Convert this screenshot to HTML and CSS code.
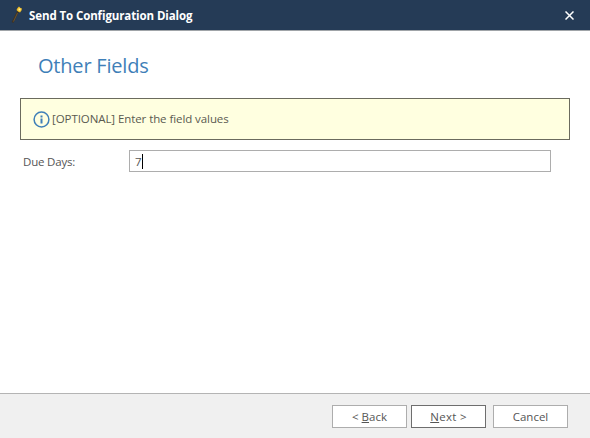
FILE: index.html
```html
<!DOCTYPE html>
<html lang="en">
<head>
    <meta charset="UTF-8">
    <title>Send To Configuration Dialog</title>
    <link rel="stylesheet" href="styles.css">
</head>
<body>
    <div class="dialog">
        <div class="title-bar">
            <svg class="wand-icon" width="18" height="20" viewBox="0 0 18 20">
                <path d="M1.5 17.5 L7 6.5" stroke="#3f3220" stroke-width="1.8"/>
                <path d="M2.5 16.5 L6.5 8" stroke="#85693a" stroke-width="0.6"/>
                <path d="M8 1.5 L9.5 3 L11 3.5 L10.5 5.5 L9 7.5 L7 6.5 L5.5 5 L6.5 3 Z" fill="#eebb22"/>
                <rect x="7.5" y="3.5" width="2" height="2" fill="#fff0a0"/>
            </svg>
            <span class="title-text">Send To Configuration Dialog</span>
            <svg class="close-icon" width="9" height="9" viewBox="0 0 9 9">
                <path d="M0.5 0.5 L8.5 8.5 M8.5 0.5 L0.5 8.5" stroke="#fff" stroke-width="1.5"/>
            </svg>
        </div>

        <div class="content">
            <h1>Other Fields</h1>
            <div class="notice">
                <svg class="info-icon" width="17" height="17" viewBox="0 0 17 17">
                    <circle cx="8.5" cy="8.5" r="7.4" fill="none" stroke="#3f7fb8" stroke-width="1.5"/>
                    <rect x="7.5" y="7.5" width="2" height="5" fill="#3f7fb8"/>
                    <rect x="7.5" y="4.5" width="2" height="2" fill="#3f7fb8"/>
                </svg>
                <span class="notice-text">[OPTIONAL] Enter the field values</span>
            </div>
            <div class="field-row">
                <label class="field-label">Due Days:</label>
                <div class="field-input"><span>7</span><span class="caret"></span></div>
            </div>
        </div>

        <div class="footer">
            <button class="btn">&lt; <u>B</u>ack</button>
            <button class="btn btn-default"><u>N</u>ext &gt;</button>
            <button class="btn btn-cancel">Cancel</button>
        </div>
    </div>
</body>
</html>
```

FILE: styles.css
```css
body {
    margin: 0;
    padding: 0;
    font-family: "Open Sans", "Noto Sans", Arial, sans-serif;
    font-size: 11.5px;
    color: #555;
    background-color: #fff;
}

.dialog {
    display: flex;
    flex-direction: column;
    width: 590px;
    height: 438px;
    overflow: hidden;
}

.title-bar {
    display: flex;
    align-items: center;
    flex: none;
    height: 31px;
    padding-left: 11px;
    box-sizing: border-box;
    background-color: #253b56;
    border-bottom: 1px solid #a0a4a8;
    color: #fff;
}

.title-text {
    flex: 1;
    font-size: 11.5px;
    font-weight: 700;
    letter-spacing: -0.1px;
}

.close-icon {
    margin-right: 16px;
}

.content {
    flex: 1;
    padding: 0 20px;
}

h1 {
    margin: 21px 0 18px 18px;
    font-size: 20px;
    line-height: 28px;
    font-weight: 400;
    letter-spacing: -0.2px;
    color: #3f7fb8;
}

.notice {
    display: flex;
    align-items: center;
    gap: 2px;
    height: 42px;
    box-sizing: border-box;
    padding-left: 12px;
    background-color: #ffffe0;
    border: 1px solid #6b6b5e;
    color: #5a5a50;
}

.notice-text {
    margin-bottom: 2px;
    letter-spacing: -0.08px;
}

.field-row {
    display: flex;
    align-items: center;
    margin-top: 10px;
}

.field-label {
    width: 106px;
    margin-right: 3px;
    padding-left: 3px;
    box-sizing: border-box;
    letter-spacing: -0.2px;
}

.field-input {
    display: flex;
    align-items: center;
    width: 422px;
    height: 22px;
    box-sizing: border-box;
    padding-left: 5px;
    border: 1px solid #adadad;
    background-color: #fff;
}

.caret {
    width: 1px;
    height: 15px;
    background-color: #000;
}

.footer {
    display: flex;
    flex: none;
    height: 45px;
    box-sizing: border-box;
    padding: 11px 22px 0 332px;
    background-color: #f0f0f0;
    border-top: 1px solid #b4b4b4;
}

.btn {
    width: 75px;
    height: 23px;
    margin-right: 4px;
    padding: 0;
    font-family: inherit;
    font-size: 11.5px;
    color: #555;
    background-color: #fff;
    border: 1px solid #adadad;
}

.btn-default {
    border-color: #6e6e6e;
    letter-spacing: 0.3px;
}

.btn-cancel {
    margin-left: 3px;
    margin-right: 0;
}
```
